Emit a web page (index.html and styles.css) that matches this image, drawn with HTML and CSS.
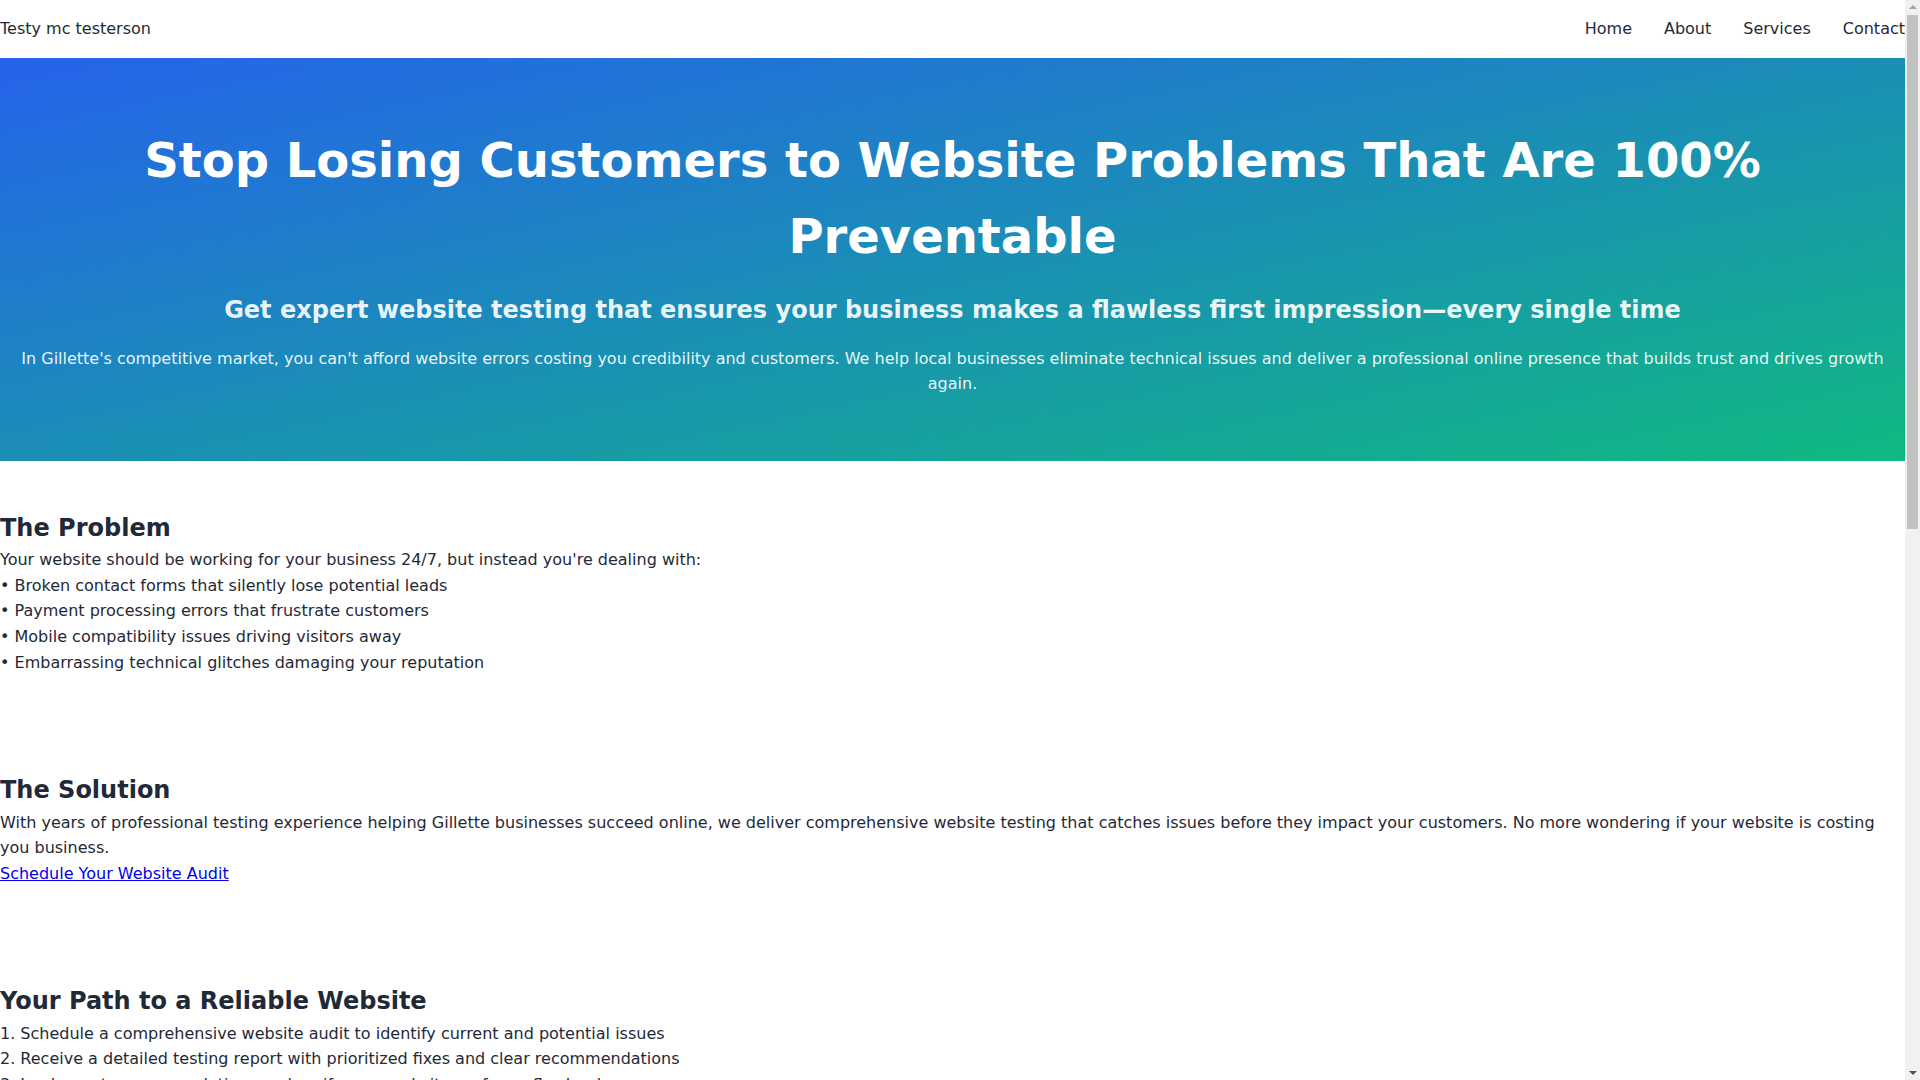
FILE: index.html
```
<!DOCTYPE html>
<html>
<head>
  <meta charset="UTF-8">
  <meta name="viewport" content="width=device-width, initial-scale=1.0">
  <title>Testy mc testerson - Website Testing</title>
  <link rel="stylesheet" href="styles.css">
</head>
<body>
  <header class="site-header">
    <div class="brand">Testy mc testerson</div>
    <nav class="nav">
      <a href="#">Home</a>
      <a href="#">About</a>
      <a href="#">Services</a>
      <a href="#">Contact</a>
    </nav>
  </header>

  <section class="hero">
    <h1>Stop Losing Customers to Website Problems That Are 100% Preventable</h1>
    <h2>Get expert website testing that ensures your business makes a flawless first impression—every single time</h2>
    <p>In Gillette's competitive market, you can't afford website errors costing you credibility and customers. We help local businesses eliminate technical issues and deliver a professional online presence that builds trust and drives growth again.</p>
  </section>

  <section class="section">
    <h2>The Problem</h2>
    <p>Your website should be working for your business 24/7, but instead you're dealing with:</p>
    <p>• Broken contact forms that silently lose potential leads</p>
    <p>• Payment processing errors that frustrate customers</p>
    <p>• Mobile compatibility issues driving visitors away</p>
    <p>• Embarrassing technical glitches damaging your reputation</p>
  </section>

  <section class="section">
    <h2>The Solution</h2>
    <p>With years of professional testing experience helping Gillette businesses succeed online, we deliver comprehensive website testing that catches issues before they impact your customers. No more wondering if your website is costing you business.</p>
    <a href="#" class="cta-link">Schedule Your Website Audit</a>
  </section>

  <section class="section">
    <h2>Your Path to a Reliable Website</h2>
    <p>1. Schedule a comprehensive website audit to identify current and potential issues</p>
    <p>2. Receive a detailed testing report with prioritized fixes and clear recommendations</p>
    <p>3. Implement recommendations and verify your website performs flawlessly</p>
  </section>

  <section class="section">
    <h2>Why Gillette Businesses Choose Us</h2>
    <p>• Local expertise and a real understanding of the Gillette market</p>
    <p>• Thorough testing across browsers, devices and screen sizes</p>
    <p>• Clear, jargon-free reports you can act on right away</p>
    <p>• Ongoing support to keep your website running smoothly</p>
  </section>

  <section class="section">
    <h2>What's at Stake</h2>
    <p>Every broken link, failed form or slow page is a customer who chose your competitor instead. A single bad experience is often all it takes for a visitor to leave and never come back.</p>
    <p>Don't let preventable problems hold your business back.</p>
  </section>

  <section class="section">
    <h2>Ready to Get Started?</h2>
    <p>Contact us today to schedule your website audit and take the first step toward a website you can rely on.</p>
    <a href="#" class="cta-link">Schedule Your Website Audit</a>
  </section>

  <footer class="site-footer">
    <p>© 2024 Testy mc testerson. All rights reserved.</p>
  </footer>

  <!-- browser scrollbar, drawn since the headless shot hides it -->
  <div class="scroll-track" aria-hidden="true">
    <span class="scroll-arrow up"></span>
    <span class="scroll-thumb"></span>
    <span class="scroll-arrow down"></span>
  </div>
</body>
</html>
```

FILE: styles.css
```
* {
  box-sizing: border-box;
}

body {
  margin: 0;
  padding-right: 15px;
  font-family: "DejaVu Sans", sans-serif;
  font-size: 16px;
  line-height: 1.6;
  color: #1f2937;
  background-color: #fff;
}

h1, h2, p {
  margin: 0;
}

.site-header {
  display: flex;
  justify-content: space-between;
  align-items: center;
  padding: 16px 0;
  background-color: #fff;
}

.brand {
  color: #1f2937;
}

.nav {
  display: flex;
  gap: 32px;
}

.nav a {
  color: #1f2937;
  text-decoration: none;
}

.hero {
  padding: 64px 16px;
  text-align: center;
  color: #fff;
  background: linear-gradient(to bottom right, #2563eb, #10b981);
}

.hero h1 {
  font-size: 48px;
  font-weight: bold;
  margin-bottom: 16px;
}

.hero h2 {
  font-size: 24px;
  font-weight: bold;
  margin-bottom: 16px;
  color: rgba(255, 255, 255, 0.92);
}

.hero p {
  color: rgba(255, 255, 255, 0.92);
}

.section {
  padding: 48px 0;
}

.section h2 {
  font-size: 24px;
  font-weight: bold;
}

.cta-link {
  color: #0000ee;
  text-decoration: underline;
}

.site-footer {
  padding: 32px 0;
  border-top: 1px solid #e5e7eb;
  color: #4b5563;
  font-size: 14px;
}

.scroll-track {
  position: fixed;
  top: 0;
  right: 0;
  bottom: 0;
  width: 15px;
  display: flex;
  flex-direction: column;
  align-items: center;
  background-color: #f1f1f1;
}

.scroll-arrow {
  flex: 0 0 15px;
  width: 0;
  height: 0;
}

.scroll-arrow.up {
  margin-top: 5px;
  flex: 0 0 auto;
  border-left: 4px solid transparent;
  border-right: 4px solid transparent;
  border-bottom: 4px solid #a3a3a3;
  margin-bottom: 6px;
}

.scroll-arrow.down {
  margin-top: auto;
  margin-bottom: 5px;
  flex: 0 0 auto;
  border-left: 4px solid transparent;
  border-right: 4px solid transparent;
  border-top: 4px solid #505050;
}

.scroll-thumb {
  width: 11px;
  height: 514px;
  background-color: #c1c1c1;
}
```
